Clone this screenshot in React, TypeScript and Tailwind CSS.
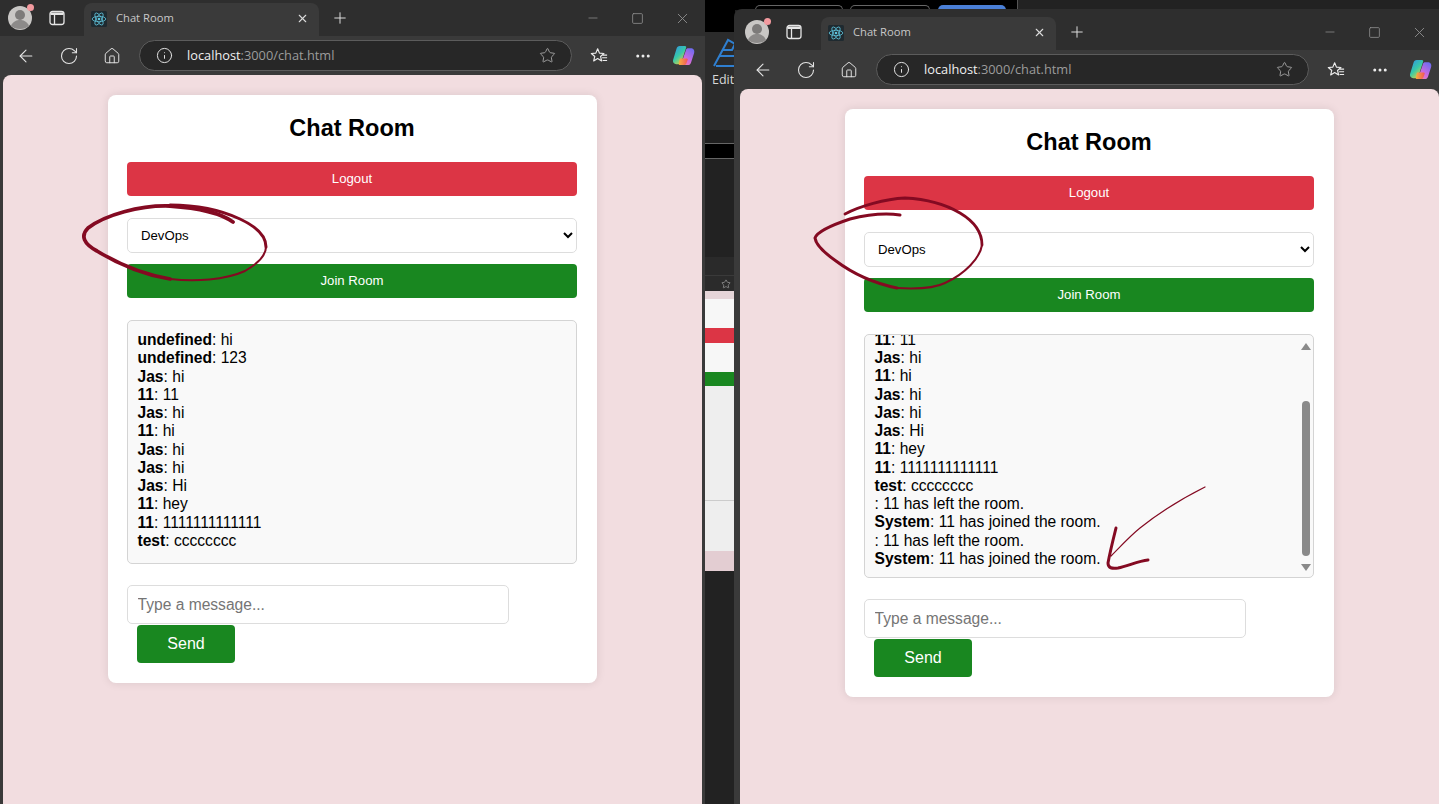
import { ArrowLeft, Ellipsis, Home, Info, Minus, Plus, RotateCw, Square, Star, X } from 'lucide-react';

type Message = { from: string; text: string };

const firstRoom: Message[] = [
  { from: 'undefined', text: 'hi' },
  { from: 'undefined', text: '123' },
  { from: 'Jas', text: 'hi' },
  { from: '11', text: '11' },
  { from: 'Jas', text: 'hi' },
  { from: '11', text: 'hi' },
  { from: 'Jas', text: 'hi' },
  { from: 'Jas', text: 'hi' },
  { from: 'Jas', text: 'Hi' },
  { from: '11', text: 'hey' },
  { from: '11', text: '1111111111111' },
  { from: 'test', text: 'cccccccc' },
];

const secondRoom: Message[] = [
  ...firstRoom.slice(3),
  { from: '', text: '11 has left the room.' },
  { from: 'System', text: '11 has joined the room.' },
  { from: '', text: '11 has left the room.' },
  { from: 'System', text: '11 has joined the room.' },
];

const Avatar = () => (
  <div className="relative -mt-[2px] ml-[9px] h-[30px] w-[30px] shrink-0">
    <svg viewBox="0 0 30 30" className="h-full w-full">
      <circle cx="14" cy="16" r="12" fill="#c9c7c5" />
      <circle cx="14" cy="13" r="5" fill="#7d7b7a" />
      <path d="M5 24c2-5 6-6 9-6s7 1 9 6c-2.500 2-5.500 3-9 3s-6.500-1-9-3z" fill="#8c8a89" />
    </svg>
    <span className="absolute top-[2px] right-[2px] h-[7px] w-[7px] rounded-full bg-[#f29a9f]" />
  </div>
);

const TabsIcon = () => (
  <svg viewBox="0 0 16 16" className="ml-[13px] h-4 w-4 shrink-0" fill="none">
    <rect x="1" y="1.500" width="14" height="13" rx="2.500" stroke="#e6e6e6" strokeWidth="1.300" />
    <path d="M1.500 2.500h13v2.500h-13z" fill="#e6e6e6" />
    <path d="M5.500 5v9" stroke="#e6e6e6" strokeWidth="1.300" />
  </svg>
);

const ReactFavicon = () => (
  <svg viewBox="0 0 16 16" className="h-4 w-4 shrink-0">
    <rect width="16" height="16" rx="1.500" fill="#1f2a30" />
    <g fill="none" stroke="#5fc4dc" strokeWidth="0.800">
      <ellipse cx="8" cy="8" rx="6.800" ry="2.700" />
      <ellipse cx="8" cy="8" rx="6.800" ry="2.700" transform="rotate(60 8 8)" />
      <ellipse cx="8" cy="8" rx="6.800" ry="2.700" transform="rotate(120 8 8)" />
    </g>
    <circle cx="8" cy="8" r="1.300" fill="#5fc4dc" />
  </svg>
);

const FavoritesIcon = () => (
  <svg viewBox="0 0 20 20" className="h-[18px] w-[18px]" fill="none" stroke="#ececec" strokeWidth="1.300" strokeLinejoin="round">
    <path d="M8.500 2l2 4.800 5 .4-3.800 3.300 1.200 5-4.400-2.700-4.400 2.700 1.200-5L1.500 7.200l5-.4z" />
    <path d="M14 9h5M13.500 12h5.500M14 15h5" strokeWidth="1.200" />
  </svg>
);

const CopilotLogo = ({ id }: { id: string }) => (
  <svg viewBox="0 0 24 24" className="h-[23px] w-[23px]">
    <defs>
      <linearGradient id={`${id}-a`} x1="0" y1="0" x2="0.700" y2="1">
        <stop offset="0" stopColor="#2f8fe8" />
        <stop offset="0.550" stopColor="#38c9a8" />
        <stop offset="1" stopColor="#e6d13c" />
      </linearGradient>
      <linearGradient id={`${id}-b`} x1="0.800" y1="0" x2="0.200" y2="1">
        <stop offset="0" stopColor="#6d6cf0" />
        <stop offset="0.600" stopColor="#c86ae0" />
        <stop offset="1" stopColor="#f27fb0" />
      </linearGradient>
      <linearGradient id={`${id}-c`} x1="0" y1="0" x2="1" y2="0">
        <stop offset="0" stopColor="#f5b13d" />
        <stop offset="1" stopColor="#f0555c" />
      </linearGradient>
    </defs>
    <path d="M8 2h5.500c1.200 0 1.600 1 1.200 2L10 18.500C9.500 20 8.500 21 6.800 21H4.500C2 21 .5 19 1.200 16.500L4.700 5C5.300 3 6.300 2 8 2z" fill={`url(#${id}-a)`} />
    <path d="M17 4.500h2.500c2.800 0 4.300 2.200 3.600 4.800L20 19c-.6 2-1.700 3-3.500 3H11c-1.200 0-1.500-1-1.200-2l4.700-13.500c.4-1.300 1.200-2 2.500-2z" fill={`url(#${id}-b)`} />
    <path d="M9 15h6.500c.8 0 1.200.8.900 1.500l-1.300 3.500c-.5 1.300-1.500 2-2.800 2H8.500c-1.300 0-1.700-1-1.300-2l.7-3.500c.2-1 .5-1.500 1.100-1.500z" fill={`url(#${id}-c)`} />
  </svg>
);

const BrowserChrome = ({ id }: { id: string }) => (
  <>
    <div className="flex h-[41px] items-end bg-[#2e2e2e]">
      <div className="flex h-[36px] items-center self-end">
        <Avatar />
        <TabsIcon />
      </div>
      <div className="ml-[19px] flex h-[33px] w-[235px] shrink-0 items-center rounded-t-lg bg-[#3a3a3a] pr-[10px] pb-[2px] pl-[7px]">
        <ReactFavicon />
        <span className="ml-[9px] font-['Open_Sans',sans-serif] text-[11.200px] text-[#c8c8c8]">Chat Room</span>
        <X className="ml-auto h-[13px] w-[13px] text-[#dcdcdc]" strokeWidth={2} />
      </div>
      <div className="flex h-[36px] items-center">
        <Plus className="ml-[12px] h-[18px] w-[18px] text-[#e0e0e0]" strokeWidth={1.300} />
      </div>
      <div className="ml-auto flex h-[36px] items-center self-end">
        <div className="flex w-[45px] justify-center">
          <Minus className="h-[14px] w-[14px] text-[#8f8f8f]" strokeWidth={1.300} />
        </div>
        <div className="flex w-[45px] justify-center">
          <Square className="h-[13px] w-[13px] text-[#8f8f8f]" strokeWidth={1.500} />
        </div>
        <div className="flex w-[45px] justify-center">
          <X className="h-[17px] w-[17px] text-[#8f8f8f]" strokeWidth={1.300} />
        </div>
      </div>
    </div>
    <div className="flex h-[39px] items-center bg-[#3a3a3a] pl-[7px]">
      <div className="flex w-[43px] justify-center">
        <ArrowLeft className="h-5 w-5 text-[#e4e4e4]" strokeWidth={1.300} />
      </div>
      <div className="flex w-[43px] justify-center">
        <RotateCw className="h-5 w-5 text-[#e4e4e4]" strokeWidth={1.300} />
      </div>
      <div className="flex w-[43px] justify-center">
        <Home className="h-[18px] w-[18px] text-[#e4e4e4]" strokeWidth={1.300} />
      </div>
      <div className="ml-[6px] flex h-[31px] w-[433px] shrink-0 items-center rounded-full border border-[#5c5c5c] bg-[#272727] pr-[15px] pl-[16px]">
        <Info className="h-[17px] w-[17px] text-[#e4e4e4]" strokeWidth={1.400} />
        <span className="ml-[14px] font-['Open_Sans',sans-serif] text-[12.800px] text-[#9c9c9c]">
          <span className="text-[#f0f0f0]">localhost</span>:3000/chat.html
        </span>
        <Star className="ml-auto h-[17px] w-[17px] text-[#a5a5a5]" strokeWidth={1.300} />
      </div>
      <div className="ml-[5px] flex w-[44px] justify-center">
        <FavoritesIcon />
      </div>
      <div className="flex w-[44px] justify-center">
        <Ellipsis className="h-[18px] w-[18px] text-[#ececec]" strokeWidth={2} />
      </div>
      <div className="flex w-[36px] justify-center">
        <CopilotLogo id={id} />
      </div>
    </div>
  </>
);

const Scrollbar = () => (
  <div className="absolute top-0 right-0 bottom-0 flex w-[14px] flex-col items-center">
    <span className="mt-[8px] h-0 w-0 border-x-[5px] border-b-[7px] border-x-transparent border-b-[#8a8a8a]" />
    <span className="mt-[51px] h-[155px] w-[8px] rounded-full bg-[#8a8a8a]" />
    <span className="mt-[8px] h-0 w-0 border-x-[5px] border-t-[7px] border-x-transparent border-t-[#8a8a8a]" />
  </div>
);

const ChatCard = ({ messages, scrolled }: { messages: Message[]; scrolled: boolean }) => (
  <div className="mx-auto mt-5 h-[588px] w-[489px] rounded-lg bg-white px-[19px] pt-[19px] font-['Liberation_Sans',sans-serif] shadow-[0_0_10px_rgba(0,0,0,0.1)]">
    <h1 className="-ml-px text-center text-[23.500px] leading-[28px] font-bold text-black">Chat Room</h1>
    <button className="mt-[20px] h-[34px] w-[450px] rounded-[4px] bg-[#dc3545] text-[13.200px] text-white">Logout</button>
    <select className="mt-[22px] h-[35px] w-[450px] rounded-[5px] border border-[#dddddd] bg-white px-[9px] text-[13.200px] text-black">
      <option>DevOps</option>
    </select>
    <button className="mt-[11px] h-[34px] w-[450px] rounded-[4px] bg-[#198720] text-[13.200px] text-white">Join Room</button>
    <div
      className={
        scrolled
          ? 'relative mt-[22px] flex h-[244px] w-[450px] flex-col justify-end overflow-hidden rounded-[5px] border border-[#d4d4d4] bg-[#f9f9f9] px-[9.500px] pt-[10px] pb-[9px] text-[15.600px] leading-[18.250px] text-black'
          : 'relative mt-[22px] flex h-[244px] w-[450px] flex-col overflow-hidden rounded-[5px] border border-[#d4d4d4] bg-[#f9f9f9] px-[9.500px] py-[10px] text-[15.600px] leading-[18.250px] text-black'
      }
    >
      <div className="shrink-0">
        {messages.map((m, i) => (
          <p key={i}>
            <strong>{m.from}</strong>: {m.text}
          </p>
        ))}
      </div>
      {scrolled && <Scrollbar />}
    </div>
    <input
      className="mt-[21px] block h-[39px] w-[382px] rounded-[5px] border border-[#dddddd] bg-white px-[9.500px] text-[15.600px] placeholder:text-[#757575]"
      placeholder="Type a message..."
    />
    <button className="mt-[1px] ml-[10px] h-[38px] w-[98px] rounded-[4px] bg-[#198720] text-[16px] text-white">Send</button>
  </div>
);

const BrowserWindow = ({ id, messages, scrolled, className }: { id: string; messages: Message[]; scrolled: boolean; className: string }) => (
  <div className={className}>
    <BrowserChrome id={id} />
    <div className="flex-1 bg-[#3a3a3a] pr-[3px] pl-[6px]">
      <div className="flow-root h-full overflow-hidden rounded-t-lg bg-[#f2dde0]">
        <ChatCard messages={messages} scrolled={scrolled} />
      </div>
    </div>
  </div>
);

// window sitting behind the two browsers, only a sliver of it shows
const DesktopStrip = () => (
  <div className="absolute top-0 left-[705px] flex h-[804px] w-[30px] flex-col overflow-hidden bg-[#222222] font-['Open_Sans',sans-serif]">
    <div className="h-[32px] bg-black" />
    <div className="flex h-[98px] flex-col bg-[#2b2b2b] pt-[6px] pl-[7px]">
      <svg viewBox="0 0 24 30" className="ml-px h-[30px] w-[24px] shrink-0" fill="none" stroke="#2f7fd0" strokeWidth="2">
        <path d="M1 28 15 2l7 4-3 6H10M7 18h15M3 28h19" />
      </svg>
      <span className="mt-[5px] text-[12.500px] leading-[14px] font-medium whitespace-nowrap text-[#d8d8d8]">Editor</span>
    </div>
    <div className="h-[13px] bg-[#1f1f1f]" />
    <div className="h-[16px] border-y border-[#666666] bg-black" />
    <div className="h-[98px] bg-[#222222]" />
    <div className="h-[19px] border-b border-[#3a3a3a] bg-[#2a2a2a]" />
    <div className="flex h-[15px] items-center justify-end bg-[#2b2b2b] pr-[4px]">
      <Star className="h-[10px] w-[10px] text-[#8f8f8f]" />
    </div>
    <div className="h-[8px] bg-[#e5d5d8]" />
    <div className="h-[29px] bg-[#f7f7f7]" />
    <div className="h-[15px] bg-[#dc3545]" />
    <div className="h-[29px] bg-[#f7f7f7]" />
    <div className="h-[14px] bg-[#198720]" />
    <div className="h-[115px] border-b border-[#cccccc] bg-[#eeeeee]" />
    <div className="h-[50px] bg-[#eeeeee]" />
    <div className="h-[20px] bg-[#e3cdd2]" />
  </div>
);

const BehindTabs = () => (
  <div className="absolute top-0 left-[735px] flex h-[10px] w-[704px] items-end bg-black">
    <span className="ml-[20px] h-[5px] w-[88px] rounded-t-md border-x border-t border-[#666666]" />
    <span className="ml-[7px] h-[5px] w-[80px] rounded-t-md border-x border-t border-[#666666]" />
    <span className="ml-[8px] h-[5px] w-[68px] rounded-t-md bg-[#4a7fd6]" />
    <span className="ml-[11px] h-[10px] w-px bg-[#555555]" />
    <span className="h-[10px] flex-1 bg-[#222222]" />
  </div>
);

// hand drawn marks on top of the screenshot
const Annotations = () => (
  <svg viewBox="0 0 1439 804" className="pointer-events-none absolute top-0 left-0 h-[804px] w-[1439px]" fill="none" stroke="#840a22" strokeLinecap="round" strokeLinejoin="round">
    <path d="M233 222C222 214 200 208 170 206C140 205 105 215 88 228C80 236 84 244 97 251C115 262 140 274 170 279" strokeWidth="3.800" />
    <path d="M170 279C195 282 225 280 245 271C257 264 266 256 266 247" strokeWidth="2" />
    <path d="M266 247C266 235 255 226 240 219C225 212 200 205 170 205" strokeWidth="3" />
    <path d="M900 215C885 213 870 214 850 219C832 225 817 232 815 238C816 246 826 254 836 261C848 270 868 282 897 288" strokeWidth="3" />
    <path d="M897 288C915 289 935 288 945 283C965 274 980 258 982 245" strokeWidth="2" />
    <path d="M982 245C982 232 975 222 960 213C945 204 925 199 905 198C885 199 860 206 845 214" strokeWidth="2.800" />
    <path d="M1205 487C1185 497 1160 512 1140 528C1130 536 1120 547 1111 556" strokeWidth="1.200" />
    <path d="M1116 528C1113 540 1110 552 1108 563C1108 568 1112 569 1118 568C1128 566 1138 561 1148 560" strokeWidth="3" />
  </svg>
);

export default function App() {
  return (
    <div className="relative h-[804px] w-[1439px] overflow-hidden bg-[#222222]">
      <DesktopStrip />
      <BehindTabs />
      <BrowserWindow id="left" messages={firstRoom} scrolled={false} className="absolute top-[-5px] left-[-3px] flex h-[809px] w-[708px] flex-col" />
      <BrowserWindow id="right" messages={secondRoom} scrolled className="absolute top-[9px] left-[734px] flex h-[795px] w-[708px] flex-col overflow-hidden rounded-tl-lg" />
      <Annotations />
    </div>
  );
}
